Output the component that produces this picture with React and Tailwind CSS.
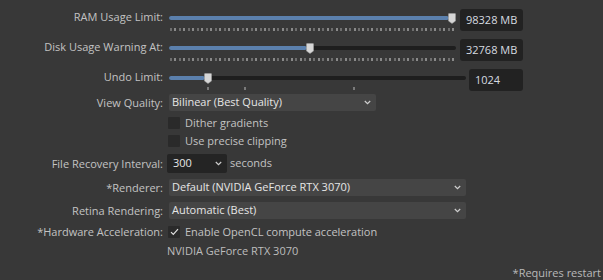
import React from "react";

const FONT = { fontFamily: '"Open Sans", "Noto Sans", sans-serif' };

function Thumb({ left }) {
  return (
    <svg
      width="8"
      height="11"
      viewBox="0 0 8 11"
      className="absolute top-[-3px]"
      style={{ left }}
    >
      <path d="M1 0.5h6a0.5 0.5 0 0 1 0.5 0.5v7l-3.5 2.5l-3.5-2.5v-7a0.5 0.5 0 0 1 0.5-0.5z" fill="#d6d6d6" stroke="#a0a0a0" strokeWidth="0.6" />
    </svg>
  );
}

function DenseTicks({ width, count }) {
  const step = (width - 2) / (count - 1);
  return (
    <svg width={width} height="3" className="block">
      {Array.from({ length: count }).map((_, i) => (
        <rect key={i} x={Math.round(i * step)} y="0" width="2" height="3" fill={i % 2 ? "#8a8a8a" : "#6e6e6e"} />
      ))}
    </svg>
  );
}

function Slider({ width, fill, ticks }) {
  return (
    <div className="flex flex-col" style={{ width }}>
      <div className="relative mt-[8px] h-[4px] rounded-full bg-[#1e1e1e]">
        <div className="h-full rounded-full bg-[#5b80ad]" style={{ width: fill }} />
        <Thumb left={fill - 1} />
      </div>
      {ticks}
    </div>
  );
}

function Label({ children, h }) {
  return (
    <div className={`w-[163px] shrink-0 text-right text-[#c3c3c3] ${h}`}>{children}</div>
  );
}

function Dropdown({ text, w, dark }) {
  return (
    <div
      className={`flex h-[17px] items-center justify-between rounded-[2px] pl-[3px] pr-[5px] text-[#e6e6e6] ${w} ${dark ? "bg-[#242424]" : "bg-[#454545]"}`}
    >
      <span>{text}</span>
      <svg width="7" height="5" viewBox="0 0 7 5">
        <path d="M0.8 1l2.7 2.6L6.2 1" stroke="#cfcfcf" strokeWidth="1.2" fill="none" />
      </svg>
    </div>
  );
}

function Check({ checked, children }) {
  return (
    <div className="flex h-[12px] items-center gap-[5px] pl-[168px] text-[#c3c3c3]">
      <div className="flex h-[12px] w-[12px] items-center justify-center rounded-[1px] bg-[#2a2a2a]">
        {checked && (
          <svg width="9" height="8" viewBox="0 0 9 8">
            <path d="M1 4.2l2.3 2.3L8 1.2" stroke="#e0e0e0" strokeWidth="1.2" fill="none" />
          </svg>
        )}
      </div>
      <span className="leading-[12px]">{children}</span>
    </div>
  );
}

export default function App() {
  return (
    <div className="h-[280px] w-[603px] overflow-hidden bg-[#383838] text-[11px]" style={FONT}>
      <div className="flex flex-col pt-[8px]">
        {/* RAM */}
        <div className="flex h-[30px] items-start">
          <Label h="leading-[18px]">RAM Usage Limit:</Label>
          <div className="ml-[6px]">
            <Slider
              width={287}
              fill={280}
              ticks={<div className="mt-[8px] pl-[1px]"><DenseTicks width={284} count={64} /></div>}
            />
          </div>
          <div className="ml-[4px] mt-[1px] flex h-[22px] w-[63px] items-center rounded-[3px] bg-[#222222] pl-[6px] text-[#d6dbe0]">
            98328 MB
          </div>
        </div>

        {/* Disk */}
        <div className="flex h-[30px] items-start">
          <Label h="leading-[18px]">Disk Usage Warning At:</Label>
          <div className="ml-[6px]">
            <Slider
              width={287}
              fill={138}
              ticks={<div className="mt-[8px] pl-[1px]"><DenseTicks width={284} count={64} /></div>}
            />
          </div>
          <div className="ml-[4px] mt-[1px] flex h-[22px] w-[63px] items-center rounded-[3px] bg-[#222222] pl-[6px] text-[#d6dbe0]">
            32768 MB
          </div>
        </div>

        {/* Undo */}
        <div className="flex h-[23px] items-start">
          <Label h="leading-[18px]">Undo Limit:</Label>
          <div className="ml-[6px]">
            <Slider
              width={297}
              fill={36}
              ticks={
                <svg width="297" height="3" className="mt-[7px] block">
                  <rect x="38" y="0" width="2" height="3" fill="#7a7a7a" />
                  <rect x="75" y="0" width="2" height="3" fill="#7a7a7a" />
                  <rect x="184" y="0" width="2" height="3" fill="#7a7a7a" />
                </svg>
              }
            />
          </div>
          <div className="ml-[3px] mt-[1px] flex h-[22px] w-[54px] items-center rounded-[3px] bg-[#222222] pl-[6px] text-[#d6dbe0]">
            1024
          </div>
        </div>

        {/* View quality */}
        <div className="mt-[3px] flex h-[17px] items-center">
          <Label h="leading-[17px]">View Quality:</Label>
          <div className="ml-[6px]">
            <Dropdown text="Bilinear (Best Quality)" w="w-[207px]" />
          </div>
        </div>

        <div className="mt-[6px]">
          <Check>Dither gradients</Check>
        </div>
        <div className="mt-[6px]">
          <Check>Use precise clipping</Check>
        </div>

        {/* File recovery */}
        <div className="mt-[7px] flex h-[19px] items-center">
          <Label h="leading-[19px]">File Recovery Interval:</Label>
          <div className="ml-[4px] flex items-center gap-[3px]">
            <div className="flex h-[19px] w-[60px] items-center justify-between rounded-[2px] bg-[#242424] pl-[6px] pr-[5px] text-[#e6e6e6]">
              <span>300</span>
              <svg width="7" height="5" viewBox="0 0 7 5">
                <path d="M0.8 1l2.7 2.6L6.2 1" stroke="#cfcfcf" strokeWidth="1.2" fill="none" />
              </svg>
            </div>
            <span className="text-[#c3c3c3]">seconds</span>
          </div>
        </div>

        {/* Renderer */}
        <div className="mt-[6px] flex h-[17px] items-center">
          <Label h="leading-[17px]">*Renderer:</Label>
          <div className="ml-[6px]">
            <Dropdown text="Default (NVIDIA GeForce RTX 3070)" w="w-[297px]" />
          </div>
        </div>

        {/* Retina */}
        <div className="mt-[6px] flex h-[17px] items-center">
          <Label h="leading-[17px]">Retina Rendering:</Label>
          <div className="ml-[6px]">
            <Dropdown text="Automatic (Best)" w="w-[297px]" />
          </div>
        </div>

        {/* Hardware accel */}
        <div className="mt-[7px] flex h-[12px] items-center">
          <Label h="leading-[12px]">*Hardware Acceleration:</Label>
          <div className="ml-[5px] flex items-center gap-[5px] text-[#c3c3c3]">
            <div className="flex h-[12px] w-[12px] items-center justify-center rounded-[1px] bg-[#2a2a2a]">
              <svg width="9" height="8" viewBox="0 0 9 8">
                <path d="M1 4.2l2.3 2.3L8 1.2" stroke="#e0e0e0" strokeWidth="1.2" fill="none" />
              </svg>
            </div>
            <span className="leading-[12px]">Enable OpenCL compute acceleration</span>
          </div>
        </div>

        <div className="mt-[6px] h-[14px] pl-[167px] leading-[14px] text-[#bdbdbd]">
          NVIDIA GeForce RTX 3070
        </div>

        <div className="mt-[8px] h-[14px] pr-[2px] text-right leading-[14px] text-[#b8b8b8]">
          *Requires restart
        </div>
      </div>
    </div>
  );
}
